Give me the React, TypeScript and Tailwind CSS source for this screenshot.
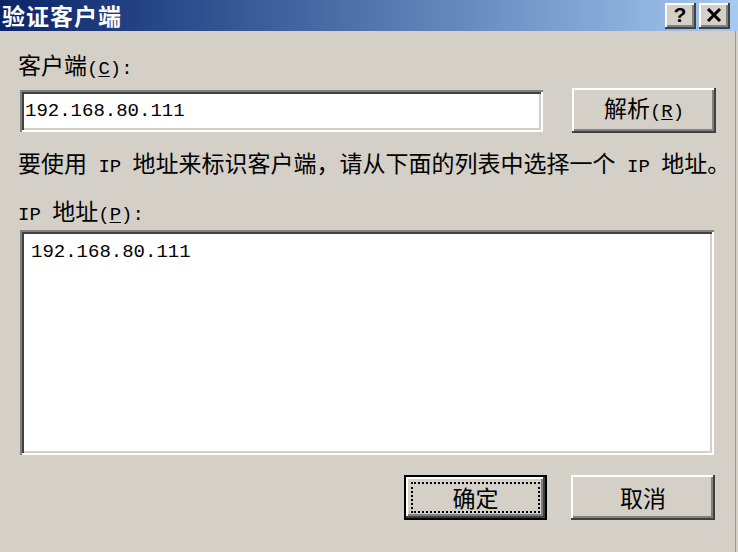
import React from "react";

const cjk = "font-['Noto_Sans_CJK_SC','Noto_Sans_CJK_JP',sans-serif]";

function M({ children }: { children: React.ReactNode }) {
  return <span className="font-['Liberation_Mono',monospace] text-[19px]">{children}</span>;
}

const raised =
  "bg-[#d4d0c8] shadow-[inset_-2px_-2px_0_#404040,inset_2px_2px_0_#ffffff,inset_-4px_-4px_0_#808080]";
const sunken =
  "bg-white shadow-[inset_2px_2px_0_#808080,inset_-2px_-2px_0_#ffffff,inset_4px_4px_0_#404040,inset_-4px_-4px_0_#d4d0c8]";

export default function App() {
  return (
    <div className={`w-[738px] h-[552px] bg-[#d4d0c8] flex flex-col overflow-hidden ${cjk} text-black text-[23px] leading-[24px]`}>
      {/* Title bar */}
      <div className="h-[31px] flex items-center justify-between bg-gradient-to-r from-[#0a246a] to-[#a6caf0] pl-[2px] pr-[8px]">
        <span className="text-white font-bold text-[23px] leading-[31px] tracking-[1px]">验证客户端</span>
        <div className="flex gap-[3px] items-center">
          <div className={`${raised} w-[31px] h-[26px] flex items-center justify-center`}>
            <span className="font-['Liberation_Sans',sans-serif] font-bold text-[21px] leading-[22px] mb-[2px] mr-[1px]">?</span>
          </div>
          <div className={`${raised} w-[31px] h-[26px] flex items-center justify-center`}>
            <svg width="16" height="14" viewBox="0 0 16 14" className="mb-[2px] mr-[1px]">
              <path d="M2 1 L14 13 M14 1 L2 13" stroke="#000" strokeWidth="3" />
            </svg>
          </div>
        </div>
      </div>

      {/* Body */}
      <div className="flex-1 flex flex-col pl-[18px] pr-[3px] border-r border-[#9a9892] mr-[2px]">
        <div className="mt-[21px] h-[24px] whitespace-nowrap">
          客户端<M>(<u className="underline-offset-2">C</u>):</M>
        </div>

        <div className="mt-[12px] flex items-center">
          <div className={`${sunken} ml-[2px] w-[523px] h-[42px] flex items-center pl-[5px]`}>
            <M>192.168.80.111</M>
          </div>
          <div className={`${raised} ml-[29px] w-[144px] h-[45px] flex items-center justify-center pb-[2px]`}>
            <span className="whitespace-nowrap">解析<M>(<u className="underline-offset-2">R</u>)</M></span>
          </div>
        </div>

        <div className="mt-[17px] h-[24px] whitespace-nowrap">
          要使用<M> IP </M>地址来标识客户端，请从下面的列表中选择一个<M> IP </M>地址。
        </div>

        <div className="mt-[24px] h-[24px] whitespace-nowrap">
          <M>IP </M>地址<M>(<u className="underline-offset-2">P</u>):</M>
        </div>

        <div className={`${sunken} mt-[8px] ml-[2px] w-[694px] h-[225px] pl-[11px] pt-[5px]`}>
          <M>192.168.80.111</M>
        </div>

        <div className="mt-[20px] flex justify-end pr-[17px] gap-[24px]">
          <div className="w-[143px] h-[45px] border-2 border-black">
            <div className={`${raised} w-full h-full flex items-center justify-center p-[5px]`}>
              <div className="w-full h-full border-2 border-dotted border-black flex items-center justify-center pb-[1px]">
                确定
              </div>
            </div>
          </div>
          <div className={`${raised} w-[144px] h-[45px] flex items-center justify-center pb-[2px]`}>
            取消
          </div>
        </div>
      </div>
    </div>
  );
}
